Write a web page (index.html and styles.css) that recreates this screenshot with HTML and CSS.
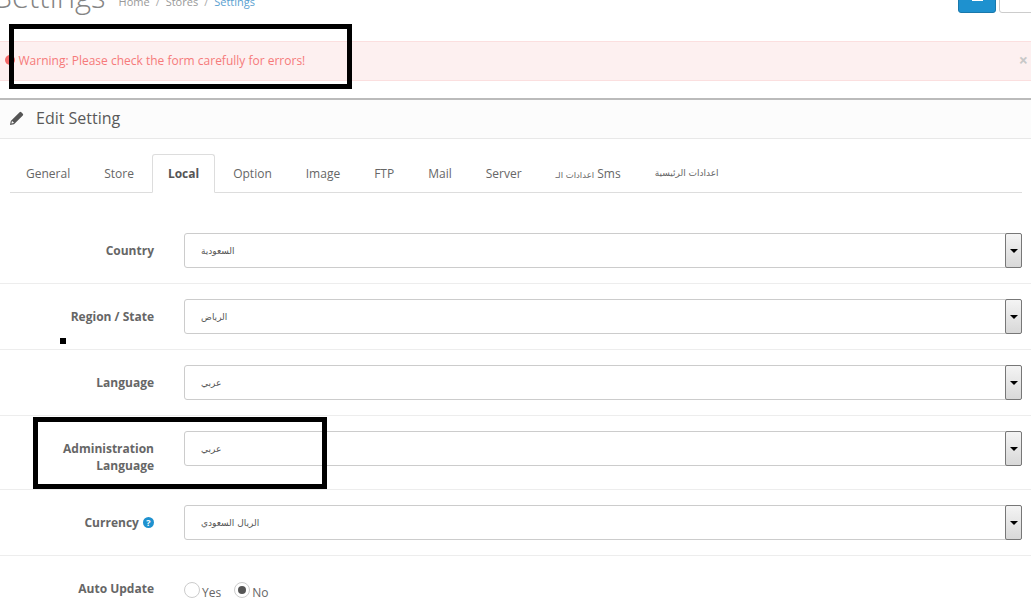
FILE: index.html
```html
<!DOCTYPE html>
<html lang="en">
<head>
<meta charset="utf-8">
<title>Settings</title>
<link rel="stylesheet" href="styles.css">
</head>
<body>
<div class="page">
  <header class="page-header">
    <h1 class="title">Settings</h1>
    <ul class="breadcrumb">
      <li>Home</li><li class="sep">/</li><li>Stores</li><li class="sep">/</li><li class="current">Settings</li>
    </ul>
    <div class="actions">
      <span class="btn btn-primary"><span class="btn-glyph"></span></span>
      <span class="btn btn-default"></span>
    </div>
  </header>

  <div class="alert">
    <svg class="alert-icon" viewBox="0 0 10 10" width="10" height="10"><circle cx="5" cy="5" r="5" fill="#f56b6b"/></svg>
    <span class="alert-text">Warning: Please check the form carefully for errors!</span>
    <span class="alert-close">×</span>
  </div>

  <section class="panel">
    <div class="panel-heading">
      <svg class="pencil" viewBox="0 0 14 14" width="14" height="14"><path fill="#555" d="M0 14l.8-4L9.6 1.2a1.2 1.2 0 0 1 1.7 0l1.5 1.5a1.2 1.2 0 0 1 0 1.7L4 13.2zM1.9 10.3l-.5 2.3 2.3-.5.1-.5-1.4-1.4z"/></svg>
      <h3>Edit Setting</h3>
    </div>
    <div class="panel-body">
      <ul class="tabs">
        <li class="tab">General</li>
        <li class="tab">Store</li>
        <li class="tab active">Local</li>
        <li class="tab">Option</li>
        <li class="tab">Image</li>
        <li class="tab">FTP</li>
        <li class="tab">Mail</li>
        <li class="tab">Server</li>
        <li class="tab"><span class="ar">اعدادات الـ</span> Sms</li>
        <li class="tab ar">اعدادات الرئيسية</li>
      </ul>

      <div class="form-row">
        <label class="label">Country</label>
        <div class="select"><span class="select-value ar">السعودية</span><span class="select-arrow"><i></i></span></div>
      </div>
      <div class="form-row">
        <label class="label">Region / State</label>
        <div class="select"><span class="select-value ar">الرياض</span><span class="select-arrow"><i></i></span></div>
      </div>
      <div class="form-row">
        <label class="label">Language</label>
        <div class="select"><span class="select-value ar">عربي</span><span class="select-arrow"><i></i></span></div>
      </div>
      <div class="form-row">
        <label class="label label-wrap">Administration Language</label>
        <div class="select"><span class="select-value ar">عربي</span><span class="select-arrow"><i></i></span></div>
      </div>
      <div class="form-row">
        <label class="label">Currency <span class="help">?</span></label>
        <div class="select"><span class="select-value ar">الريال السعودي</span><span class="select-arrow"><i></i></span></div>
      </div>
      <div class="form-row form-row-last">
        <label class="label">Auto Update</label>
        <div class="radios">
          <span class="radio"><i class="radio-dot"></i><span class="radio-text">Yes</span></span>
          <span class="radio"><i class="radio-dot checked"></i><span class="radio-text">No</span></span>
        </div>
      </div>
    </div>
  </section>

  <div class="mark mark-alert"></div>
  <div class="mark mark-dot"></div>
  <div class="mark mark-admin"></div>
</div>
</body>
</html>
```
FILE: styles.css
```css
* { box-sizing: border-box; }
html, body { margin: 0; padding: 0; background: #fff; overflow: hidden; }
body { font-family: "Open Sans", sans-serif; font-size: 12px; color: #666; }
ul { list-style: none; margin: 0; padding: 0; }
.page { position: relative; width: 1031px; height: 598px; overflow: hidden; }
.ar { font-family: "DejaVu Sans", "Noto Sans", sans-serif; }

.page-header { height: 41px; display: flex; align-items: flex-start; position: relative; }
.title { margin: -24px 0 0 -5px; font-size: 31px; line-height: 40px; font-weight: 300; color: #848484; }
.breadcrumb { display: flex; margin: -6px 0 0 13px; font-size: 11px; line-height: 16px; color: #999; }
.breadcrumb .sep { margin: 0 6px; color: #aaa; }
.breadcrumb .current { color: #5a9fd0; }
.actions { margin: -28px 0 0 auto; display: flex; gap: 3px; width: 73px; flex: none; }
.btn { display: block; width: 38px; height: 41px; border-radius: 3px; flex: none; position: relative; }
.btn-primary { background: #1e91cf; border: 1px solid #1978ab; }
.btn-glyph { display: block; position: absolute; left: 13px; top: 24px; width: 11px; height: 4px; background: #fff; }
.btn-default { background: #fff; border: 1px solid #ccc; }

.alert { height: 40px; display: flex; align-items: center; background: #fdf0f0; border-top: 1px solid #fbdfdf; border-bottom: 1px solid #fbdfdf; color: #f67a7a; padding: 0 3px 2px 5px; font-size: 12px; }
.alert-icon { flex: none; }
.alert-text { margin-left: 3.5px; }
.alert-close { margin-left: auto; color: #c8c8c8; font-size: 16px; font-weight: 700; line-height: 16px; }

.panel { margin-top: 17px; border-top: 2px solid #bbb; }
.panel-heading { height: 39px; display: flex; align-items: center; padding: 0 0 2px 10px; background: #fcfcfc; border-bottom: 1px solid #e8e8e8; }
.panel-heading h3 { margin: 0 0 0 12px; font-size: 16px; font-weight: 400; color: #595959; }
.pencil { flex: none; }

.panel-body { padding-top: 15px; }
.tabs { display: flex; margin: 0 9px 40px 10px; height: 39px; border-bottom: 1px solid #ddd; }
.tab { height: 39px; padding: 11px 15px 0; line-height: 15px; color: #666; border: 1px solid transparent; white-space: nowrap; margin-right: 2px; }
.tab.active { font-weight: 700; color: #555; background: #fff; border-color: #ddd; border-bottom-color: #fff; border-radius: 3px 3px 0 0; }
.tab .ar { font-size: 8.5px; }
.tab.ar { font-size: 9px; }

.form-row { display: grid; grid-template-columns: 154px 1fr; column-gap: 30px; align-items: start; padding: 15px 9px 15px 0; border-bottom: 1px solid #ededed; }
.tabs + .form-row { padding-top: 0; }
.form-row-last { border-bottom: 0; }
.label { display: block; text-align: right; font-weight: 700; font-size: 12px; line-height: 17px; color: #666; padding-top: 9px; }
.label-wrap { padding-left: 50px; }
.help { display: inline-block; width: 11px; height: 11px; border-radius: 50%; background: #1e91cf; color: #fff; font-size: 9px; line-height: 11px; text-align: center; vertical-align: 1px; margin-left: 1px; }

.select { display: flex; height: 35px; align-items: stretch; border: 1px solid #ccc; border-radius: 3px; background: #fff; position: relative; padding-right: 17px; }
.select-value { flex: 1; font-size: 9px; line-height: 35px; padding-left: 16px; color: #555; }
.select-arrow { position: absolute; top: -1px; right: -1px; width: 17px; height: 35px; border: 1px solid #777; background: linear-gradient(#f4f4f4, #d8d8d8); display: flex; align-items: center; justify-content: center; border-radius: 2px; }
.select-arrow i { width: 0; height: 0; border-left: 4px solid transparent; border-right: 4px solid transparent; border-top: 4px solid #000; }

.radios { display: flex; gap: 13px; padding-top: 11px; }
.radio { display: flex; gap: 2px; align-items: flex-start; }
.radio-dot { width: 16px; height: 16px; border: 1px solid #ccc; border-radius: 50%; background: #fff; position: relative; }
.radio-dot.checked::after { content: ""; position: absolute; left: 3px; top: 3px; width: 8px; height: 8px; border-radius: 50%; background: #555; }
.radio-text { line-height: 16px; padding-top: 3px; color: #666; }

.mark { position: absolute; }
.mark-alert { left: 9px; top: 24px; width: 343px; height: 65px; border: 5px solid #000; }
.mark-dot { left: 60px; top: 338px; width: 6px; height: 6px; background: #000; }
.mark-admin { left: 33px; top: 417px; width: 294px; height: 72px; border: 5px solid #000; }
```
